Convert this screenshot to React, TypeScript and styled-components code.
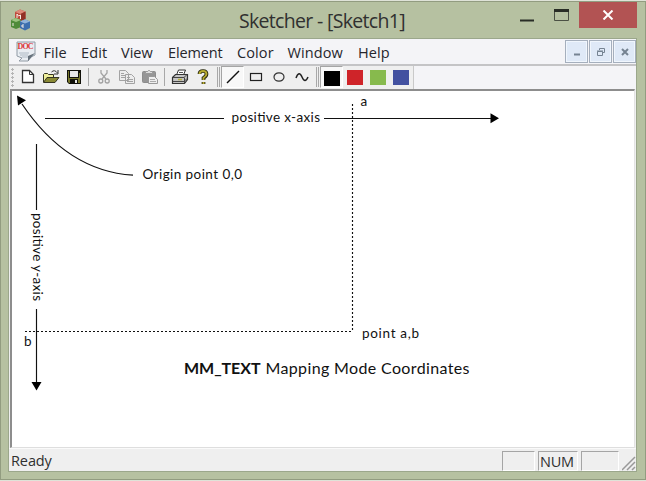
import React from "react";
import styled, { createGlobalStyle } from "styled-components";

const Global = createGlobalStyle`
  * { box-sizing: border-box; }
  body { margin: 0; background: #dfe3d8; overflow: hidden; }
  svg { display: block; }
`;

const Frame = styled.div`
  width: 646px;
  height: 479px;
  margin-top: 1px;
  border: 1px solid #929c80;
  background: #b6c1a1;
  padding: 0 8px 7px 7px;
  display: flex;
  flex-direction: column;
  font-family: "Open Sans", "Noto Sans", sans-serif;
  color: #303030;
`;

const TitleBar = styled.header`
  height: 36px;
  flex: none;
  display: flex;
  align-items: flex-start;
`;

const AppIcon = styled.div`
  margin: 7px 0 0 2px;
  width: 22px;
`;

const Title = styled.h1`
  margin: 5px 0 0 207px;
  width: 286px;
  font-size: 19.5px;
  line-height: 27px;
  letter-spacing: -0.68px;
  font-weight: 400;
  white-space: nowrap;
`;

const CaptionIcon = styled.div<{ $w: number; $top: number; $left: number }>`
  width: ${(p) => p.$w}px;
  margin: ${(p) => p.$top}px 0 0 ${(p) => p.$left}px;
  flex: none;
`;

const CloseButton = styled.button`
  margin: 0 0 0 auto;
  padding: 0;
  border: 0;
  width: 58px;
  height: 26px;
  background: #b25353;
  display: grid;
  place-items: center;
`;

const Client = styled.main`
  flex: 1;
  min-height: 0;
  border: 1px solid #9ba78b;
  background: #efefef;
  display: flex;
  flex-direction: column;
`;

const MenuBar = styled.nav`
  height: 27px;
  flex: none;
  background: #f4f4f7;
  border-bottom: 2px solid #c4c4c6;
  display: flex;
  align-items: flex-start;
  padding: 1px 0 0 6px;
`;

const DocIcon = styled.div`
  width: 28.5px;
  flex: none;
  padding-top: 1px;
`;

const MenuItem = styled.span<{ $w: number; $ls: number }>`
  width: ${(p) => p.$w}px;
  flex: none;
  font-size: 14.5px;
  line-height: 25px;
  letter-spacing: ${(p) => p.$ls}px;
  color: #26262c;
`;

const ChildControls = styled.div`
  margin-left: auto;
  display: flex;
  gap: 1px;
`;

const ChildButton = styled.button`
  width: 23px;
  height: 23px;
  padding: 0;
  border: 1px solid #a5afbd;
  box-shadow: inset 0 0 0 1px #f0f6fd;
  background: #dfe9f7;
  display: grid;
  place-items: center;
`;

const ToolBar = styled.div`
  height: 23px;
  flex: none;
  display: flex;
  background: #f4f4f7;
`;

const ToolStrip = styled.div`
  width: 405px;
  height: 23px;
  background: #efefef;
  border-right: 1px solid #c9c9c9;
  display: flex;
  align-items: flex-start;
`;

const Grip = styled.div`
  width: 5px;
  height: 19px;
  margin: 2px 0 0 2px;
  flex: none;
  background: radial-gradient(circle at 1.5px 1.5px, #b5b5b5 1px, transparent 1.4px) 0 0 / 8px 4px;
`;

const Tool = styled.button<{ $pressed?: boolean }>`
  width: 23px;
  height: 22px;
  padding: 0;
  flex: none;
  border: 1px solid;
  border-color: ${(p) => (p.$pressed ? "#a5a5a5 #fff #fff #a5a5a5" : "transparent")};
  background: ${(p) => (p.$pressed ? "#f8f8f8" : "transparent")};
  display: grid;
  place-items: center;
`;

const Separator = styled.div<{ $before: number; $after: number; $double?: boolean }>`
  width: ${(p) => (p.$double ? 3 : 1)}px;
  height: ${(p) => (p.$double ? 20 : 18)}px;
  flex: none;
  margin: ${(p) => (p.$double ? 1 : 2)}px ${(p) => p.$after}px 0 ${(p) => p.$before}px;
  border: solid #a8a8a8;
  border-width: 0 ${(p) => (p.$double ? 1 : 0)}px 0 1px;
`;

const Swatch = styled.span<{ $color: string; $drop?: boolean }>`
  width: 16px;
  height: 15px;
  background: ${(p) => p.$color};
  transform: translateY(${(p) => (p.$drop ? 1 : 0)}px);
`;

const Sheet = styled.section`
  flex: 1;
  min-height: 0;
  margin: 0 1px;
  overflow: hidden;
  background: #fff;
  border: solid #8d8d8d;
  border-width: 2px 0 0 2px;
  border-bottom: 1px solid #dedede;
  border-right: 1px solid #e3e3e3;
`;

const StatusBar = styled.footer`
  height: 23px;
  flex: none;
  display: flex;
  align-items: flex-end;
  border-top: 1px solid #fafafa;
  padding-left: 2px;
  font-size: 14.5px;
  line-height: 20px;
`;

const Ready = styled.span`
  flex: 1;
  letter-spacing: -0.1px;
`;

const Pane = styled.span<{ $w: number }>`
  width: ${(p) => p.$w}px;
  height: 20px;
  line-height: 20px;
  margin-right: 3px;
  padding-left: 1px;
  border: 1px solid;
  border-color: #a5a5a5 #fff #fff #a5a5a5;
  letter-spacing: -0.25px;
`;

const Resize = styled.div`
  width: 14px;
`;

const menus: [string, number, number][] = [
  ["File", 37.5, 0.1],
  ["Edit", 40, 0.1],
  ["View", 47, 0],
  ["Element", 69, -0.12],
  ["Color", 50.5, 0.1],
  ["Window", 70.5, 0.1],
  ["Help", 40, 0.1],
];

const Blocks = () => (
  <svg width="22" height="22" viewBox="0 0 22 22">
    <path d="M5 3l5-2.500 5.500 2v7.500l-5.500 2-5-2z" fill="#bd4a3c" />
    <path d="M5 3l5-2.500 5.500 2-5 2.500z" fill="#de8a7a" />
    <path d="M10.500 5l5-2.500V10l-5 2z" fill="#923027" />
    <path d="M1 11l5-2 5 2v7l-5 2-5-2z" fill="#4f8b3a" />
    <path d="M1 11l5-2 5 2-5 2z" fill="#9bc480" />
    <path d="M10 12.500l5-2 5 2v6.500l-5 2.500-5-2.500z" fill="#3c6fae" />
    <path d="M10 12.500l5-2 5 2-5 2z" fill="#91b5da" />
    <path d="M7 9V5l1.500 2L10.500 6v4M3 14v3M14 16h-2v2h2" fill="none" stroke="#f5ece5" />
  </svg>
);

const Doc = () => (
  <svg width="21" height="21" viewBox="0 0 21 21">
    <path d="M2 1h18v13l-4 2-3 4H4l3-3-5-2z" fill="#e9edf2" stroke="#909aa4" />
    <path d="M4 12h10M5 14h8M7 16h7" stroke="#aeb9c4" />
    <path d="M20 12l-7 8 0-5z" fill="#66717b" />
    <text x="2.500" y="8" fontSize="8" fontWeight="700" fontFamily="Liberation Serif, serif" fill="#dc3535" textLength="16">DOC</text>
  </svg>
);

const NewIcon = () => (
  <svg width="16" height="16"><path d="M2.500 1.500h7l4 4v8h-11z" fill="#fff" stroke="#333" strokeWidth="1.300" /><path d="M9.500 1.500v4h4" fill="none" stroke="#333" /></svg>
);
const OpenIcon = () => (
  <svg width="18" height="16"><path d="M1.500 13V5.500l1-1h3l1 1h5V8" fill="#eeee9a" stroke="#333321" /><path d="M1.500 13.500L5 8.500h12l-4 5z" fill="#8a8a35" stroke="#333321" /><path d="M9.500 3q3-3 6 1M16 1v4h-4" fill="none" stroke="#333" /></svg>
);
const SaveIcon = () => (
  <svg width="16" height="16"><path d="M1 1h14v14H3l-2-2z" fill="#11110a" /><path d="M4 2h8v6H4z" fill="#e7e7e7" /><path d="M2 2h1v7h10V4h1v10h-2v-4H4v4H3l-1-1z" fill="#77772c" /><path d="M9 11h2v3H9z" fill="#e7e7e7" /></svg>
);
const CutIcon = () => (
  <svg width="14" height="16" fill="none" stroke="#a3a3a3" strokeWidth="1.300"><path d="M4 1v3l5 6M10 1v3l-5 6" /><circle cx="3.800" cy="12" r="2" /><circle cx="10.200" cy="12" r="2" /></svg>
);
const CopyIcon = () => (
  <svg width="18" height="16" fill="#ededed" stroke="#a3a3a3"><path d="M1.500 1.500h6l3 3v7h-9zM7.500 5.500h6l3 3v6h-9z" /><path d="M3 4.500h3M3 6.500h4M3 8.500h4M9 8.500h3M9 10.500h6M9 12.500h6" /></svg>
);
const PasteIcon = () => (
  <svg width="18" height="16"><rect x="1.500" y="2.500" width="13" height="11" rx="1" fill="#969696" stroke="#8d8d8d" /><path d="M4.500 4.500v-2h2l1-1h1l1 1h2v2z" fill="#ddd" stroke="#999" /><path d="M7.500 7.500h6l3 3v4h-9z" fill="#eee" stroke="#999" /><path d="M9 10.500h5M9 12.500h6" stroke="#aaa" /></svg>
);
const PrintIcon = () => (
  <svg width="18" height="16"><path d="M5.500 6l2-5h7l-2 5" fill="#fff" stroke="#333" /><path d="M8 3.500h4M7 5.500h4" stroke="#555" /><path d="M1.500 8.500l3-3h12v5l-3 4h-12z" fill="#c4c4c4" stroke="#333" strokeWidth="1.200" /><path d="M2 8.500h11l3-3M2 12.500h11l3-3M13.500 8.500v6" fill="none" stroke="#444" /><path d="M7 10.500h4" stroke="#b8b33c" strokeWidth="1.500" /></svg>
);
const HelpIcon = () => (
  <svg width="16" height="16"><path d="M4.500 5q0-3 3.500-3t3.500 3q0 2-3 4v2M8.500 13v2" fill="none" stroke="#28280f" strokeWidth="3.700" /><path d="M4.500 5q0-3 3.500-3t3.500 3q0 2-3 4v2M8.500 13v2" fill="none" stroke="#b6aa30" strokeWidth="1.900" /></svg>
);

const Label = styled.text`
  font-family: Lato, "Open Sans", sans-serif;
  font-size: 13.5px;
  fill: #111;
`;

const Caption = styled(Label)`
  font-size: 16px;
`;

const Diagram = () => (
  <svg width="622" height="356" viewBox="12 91 622 356">
    <g fill="none" stroke="#111" strokeWidth="1.150">
      <path d="M45 118.500H224M324 118.500H492" />
      <path d="M36.500 144V210M36.500 309V383" />
      <path d="M22 104Q67 171 133 175.200" strokeWidth="1.200" />
      <path d="M352.500 104V331.500" strokeDasharray="2 2" />
      <path d="M25 331.500H352" strokeDasharray="2 2" />
    </g>
    <path d="M490.500 113.300v10l8.500-5zM31.500 382h10l-5 8.500zM17 95.500l9 4.700-8 5.300z" fill="#000" />
    <Label x="231.500" y="122" textLength="88.500">positive x-axis</Label>
    <Label x="360.500" y="106">a</Label>
    <Label x="142.500" y="179" textLength="99.500">Origin point 0,0</Label>
    <Label transform="translate(33 213) rotate(90)" textLength="88">positive y-axis</Label>
    <Label x="24" y="346">b</Label>
    <Label x="362" y="338" textLength="57">point a,b</Label>
    <Caption x="184" y="374" textLength="76.500" fontWeight="700">MM_TEXT</Caption>
    <Caption x="265.500" y="374" textLength="204">Mapping Mode Coordinates</Caption>
  </svg>
);

export default function App() {
  return (
    <>
      <Global />
      <Frame>
        <TitleBar>
          <AppIcon><Blocks /></AppIcon>
          <Title>Sketcher - [Sketch1]</Title>
          <CaptionIcon $w={15} $top={17} $left={-5}>
            <svg width="15" height="3"><path d="M0 1.500h14" stroke="#292d26" strokeWidth="2" /></svg>
          </CaptionIcon>
          <CaptionIcon $w={16} $top={7} $left={19}>
            <svg width="16" height="13"><path d="M.5 1v10.500h14V1" fill="none" stroke="#4b5044" /><path d="M0 1.500h15" stroke="#292d26" strokeWidth="3" /></svg>
          </CaptionIcon>
          <CloseButton aria-label="Close">
            <svg width="12" height="10"><path d="M1.500 .5l9 9M10.500 .5l-9 9" stroke="#fff" strokeWidth="2" /></svg>
          </CloseButton>
        </TitleBar>
        <Client>
          <MenuBar>
            <DocIcon><Doc /></DocIcon>
            {menus.map(([name, w, ls]) => <MenuItem key={name} $w={w} $ls={ls}>{name}</MenuItem>)}
            <ChildControls>
              <ChildButton aria-label="Minimize drawing"><svg width="10" height="10"><path d="M2 7.500h6" stroke="#758392" strokeWidth="2" /></svg></ChildButton>
              <ChildButton aria-label="Restore drawing"><svg width="10" height="10" fill="none" stroke="#758392"><path d="M1.500 4.500h5v4h-5zM1 4h6M3.500 3V1.500h5v4H7" /></svg></ChildButton>
              <ChildButton aria-label="Close drawing"><svg width="10" height="10"><path d="M2 2l6 6M8 2l-6 6" stroke="#758392" strokeWidth="2" /></svg></ChildButton>
            </ChildControls>
          </MenuBar>
          <ToolBar>
            <ToolStrip>
              <Grip />
              <Tool><NewIcon /></Tool>
              <Tool><OpenIcon /></Tool>
              <Tool><SaveIcon /></Tool>
              <Separator $before={3} $after={3} />
              <Tool><CutIcon /></Tool>
              <Tool><CopyIcon /></Tool>
              <Tool><PasteIcon /></Tool>
              <Separator $before={3} $after={3} />
              <Tool><PrintIcon /></Tool>
              <Tool><HelpIcon /></Tool>
              <Separator $before={3} $after={1} $double />
              <Tool $pressed><svg width="16" height="16"><path d="M2 14L14 2" stroke="#111" strokeWidth="1.400" /></svg></Tool>
              <Tool><svg width="16" height="16"><rect x="2.500" y="4.500" width="11" height="7" fill="none" stroke="#222" strokeWidth="1.200" /></svg></Tool>
              <Tool><svg width="16" height="16"><ellipse cx="8" cy="8" rx="5" ry="4.200" fill="none" stroke="#333" strokeWidth="1.200" /></svg></Tool>
              <Tool><svg width="16" height="16"><path d="M2 9Q5 1 8 8T14 8" fill="none" stroke="#222" strokeWidth="1.500" /></svg></Tool>
              <Separator $before={3} $after={1} $double />
              <Tool $pressed><Swatch $color="#000" $drop /></Tool>
              <Tool><Swatch $color="#cf2429" /></Tool>
              <Tool><Swatch $color="#87ba4d" /></Tool>
              <Tool><Swatch $color="#4351a0" /></Tool>
            </ToolStrip>
          </ToolBar>
          <Sheet><Diagram /></Sheet>
          <StatusBar>
            <Ready>Ready</Ready>
            <Pane $w={33} />
            <Pane $w={40}>NUM</Pane>
            <Pane $w={38} />
            <Resize><svg width="14" height="15"><path d="M0 14L13 1M5 14l8-8M10 14l3-3" stroke="#999" strokeWidth="1.500" /></svg></Resize>
          </StatusBar>
        </Client>
      </Frame>
    </>
  );
}
